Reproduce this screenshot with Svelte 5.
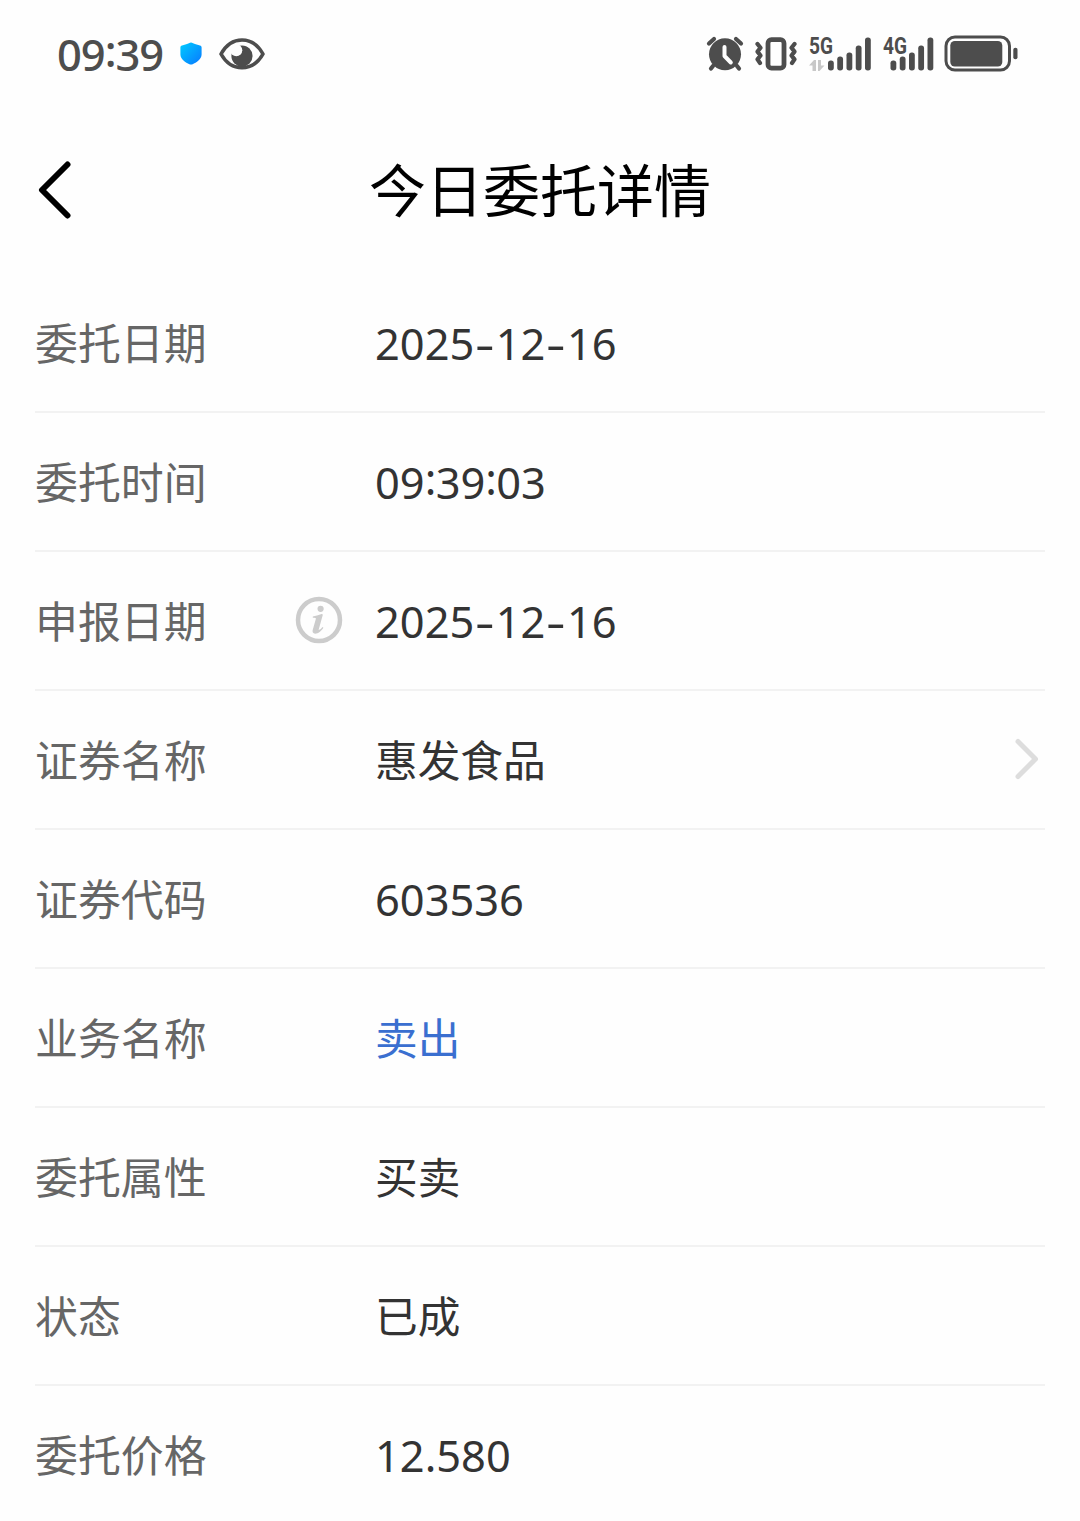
<script lang="ts">
  /**
   * Order detail page: status bar, title bar and a list of label / value rows.
   */

  interface Row {
    label: string;
    value: string;
    numeric?: boolean;
    info?: boolean;
    link?: boolean;
    tone?: "sell";
  }

  const ROWS: Row[] = [
    { label: "委托日期", value: "2025-12-16", numeric: true },
    { label: "委托时间", value: "09:39:03", numeric: true },
    { label: "申报日期", value: "2025-12-16", numeric: true, info: true },
    { label: "证券名称", value: "惠发食品", link: true },
    { label: "证券代码", value: "603536", numeric: true },
    { label: "业务名称", value: "卖出", tone: "sell" },
    { label: "委托属性", value: "买卖" },
    { label: "状态", value: "已成" },
    { label: "委托价格", value: "12.580", numeric: true },
  ];

  // heights of the signal bars, left to right
  const BARS = [10, 14, 18, 25, 33];

  // separators get their own width, so split them from the digits
  const split = (text: string) => text.split(/([-:])/);
</script>

{#snippet digits(text: string)}
  {#each split(text) as part}{#if part === "-"}<span class="dash">-</span>{:else if part === ":"}<span class="colon">:</span>{:else}{part}{/if}{/each}
{/snippet}

{#snippet signal(name: string, start: number, arrows: boolean)}
  <svg class="signal" width={start + 43} height="36" viewBox="0 0 {start + 43} 36" fill="currentColor">
    <text x="0" y="17.6" textLength="24" lengthAdjust="spacingAndGlyphs">{name}</text>
    {#if arrows}
      <path class="signal__arrows" d="M0 29.500 5 24H7v11H3.500v-5.500zM9 24h3v5.500h3.500L10.500 35H9z" />
    {/if}
    {#each BARS as h, i}
      <rect x={start + i * 9.25} y={34.5 - h} width="5.8" height={h} rx="2.7" />
    {/each}
  </svg>
{/snippet}

<div class="page">
  <div class="status">
    <span class="status__time">{@render digits("09:39")}</span>
    <svg class="status__shield" width="22" height="23" viewBox="0 0 22 23">
      <defs>
        <linearGradient id="shield" x1="0" y1="0" x2="1" y2="1">
          <stop offset="0" stop-color="#00ccff" />
          <stop offset="1" stop-color="#0878ff" />
        </linearGradient>
      </defs>
      <path fill="url(#shield)" d="M11 .4c1.300 0 2.600 1.100 4.800 1.900l4.200 1.300c1 .3 1.600 1 1.600 2v6.900c0 4.500-5.300 8.300-9 9.700-1 .4-2.200.4-3.200 0C5.700 20.800.4 17 .4 12.500V5.600c0-1 .6-1.700 1.600-2l4.200-1.300C8.400 1.500 9.700.4 11 .4z" />
    </svg>
    <svg class="status__eye" width="46" height="32" viewBox="0 0 46 32">
      <path fill="none" stroke="currentColor" stroke-width="3.600" stroke-linejoin="round" d="M2 16C7 7 14.500 2 23 2s16 5 21 14c-5 9-12.500 13.800-21 13.800S7 25 2 16z" />
      <circle cx="23" cy="18" r="10.600" fill="currentColor" />
      <circle cx="17.300" cy="12.300" r="6" fill="#fefefe" />
    </svg>

    <div class="status__right">
      <svg class="status__alarm" width="38" height="36" viewBox="0 0 38 36" fill="none" stroke="currentColor" stroke-linecap="round">
        <circle cx="19" cy="18.300" r="16" fill="currentColor" stroke="none" />
        <path stroke-width="4.200" d="M3 7.500 8 3M35 7.500 30 3M7 30 5 32.500M31 30 33 32.500" />
        <path stroke="#fefefe" stroke-width="4" stroke-linejoin="round" d="M18.500 11v9l6.300 6.500" />
      </svg>
      <svg class="status__vibrate" width="44" height="36" viewBox="0 0 44 36" fill="none" stroke="currentColor">
        <rect x="14" y="3.700" width="16" height="28.500" rx="3.500" stroke-width="4.800" />
        <path stroke-width="4.200" stroke-linecap="round" stroke-linejoin="round" d="M3.500 8l3 3.800-3 3.800 3 3.900-3 3.900 2.500 3.600M40.500 8l-3 3.800 3 3.800-3 3.900 3 3.900-2.500 3.600" />
      </svg>
      {@render signal("5G", 19, true)}
      {@render signal("4G", 7.5, false)}
      <svg class="status__battery" width="74" height="38" viewBox="0 0 74 38" fill="currentColor">
        <rect x="2" y="2" width="63.500" height="33" rx="9" fill="none" stroke="currentColor" stroke-width="3" />
        <rect x="6.300" y="6" width="52" height="25.500" rx="4.500" />
        <rect x="69.300" y="12.800" width="4.200" height="11.500" rx="2" />
      </svg>
    </div>
  </div>

  <header class="header">
    <button class="header__back" aria-label="返回">
      <svg width="36" height="60" viewBox="0 0 36 60" fill="none" stroke="#000" stroke-width="6" stroke-linecap="round" stroke-linejoin="round">
        <path d="M32.500 4.500 7 30l25.500 25.500" />
      </svg>
    </button>
    <h1 class="header__title">今日委托详情</h1>
  </header>

  <main class="list">
    {#each ROWS as row (row.label)}
      <div class="row">
        <span class="row__label">{row.label}</span>
        <span class="row__info">
          {#if row.info}
            <svg width="48" height="48" viewBox="0 0 48 48" fill="none" stroke="#ccc">
              <circle cx="24" cy="24" r="21" stroke-width="4.500" />
              <circle cx="25.600" cy="12.800" r="3.100" fill="#ccc" stroke="none" />
              <path fill="#ccc" stroke="none" d="M17.800 20.600c2.500-.7 5.800-1.600 8.800-2.600l1.300.6-4.300 15.500c1.800-.5 2.700-1.500 3.900-3l.9.700c-2 3.400-5.200 5.900-8.200 5.900-2.300 0-3-1.700-2.500-3.600l3.200-11.400c.2-.8-1-1-3.100-1z" />
            </svg>
          {/if}
        </span>
        <span class="row__value" class:row__value--numeric={row.numeric} class:row__value--sell={row.tone === "sell"}>{@render digits(row.value)}</span>
        {#if row.link}
          <svg class="row__arrow" width="30" height="46" viewBox="0 0 30 46" fill="none" stroke="#ddd" stroke-width="5" stroke-linecap="round" stroke-linejoin="round">
            <path d="M4 5.500 21.500 23 4 40.500" />
          </svg>
        {/if}
      </div>
    {/each}
  </main>
</div>

<style>
  :global(body) {
    background: #fefefe;
  }

  .page {
    box-sizing: border-box;
    width: 1080px;
    height: 1521px;
    overflow: hidden;
    background: #fefefe;
    font-family: "Noto Sans", "Noto Sans CJK SC", sans-serif;
  }

  .status {
    display: flex;
    align-items: center;
    box-sizing: border-box;
    height: 107px;
    padding: 0 62px 0 57px;
    color: #4d4d4d;
  }

  .status svg {
    flex-shrink: 0;
    overflow: visible;
  }

  .status__time {
    width: 107px;
    font-size: 43.500px;
    font-weight: 500;
    line-height: 60px;
    letter-spacing: -1.100px;
    white-space: nowrap;
  }

  .status__shield {
    margin-left: 16px;
  }

  .status__eye {
    margin-left: 17px;
  }

  .status__right {
    display: flex;
    align-items: center;
    margin-left: auto;
  }

  .status__vibrate {
    margin-left: 10px;
  }

  .signal {
    margin-left: 11.500px;
  }

  .signal text {
    font-family: Roboto, sans-serif;
    font-size: 23px;
    font-weight: 700;
  }

  .signal__arrows {
    fill: #c8c8c8;
  }

  .status__battery {
    margin-left: 11px;
  }

  .header {
    display: grid;
    grid-template-columns: 140px 1fr 140px;
    align-items: center;
    height: 167px;
  }

  .header__back {
    display: flex;
    margin: 0 0 1px;
    padding: 0 0 0 35px;
    border: none;
    background: none;
  }

  .header__title {
    margin: 0 0 8px;
    color: #000;
    font-family: "Noto Sans CJK SC", sans-serif;
    font-size: 57px;
    font-weight: 400;
    line-height: 80px;
    text-align: center;
  }

  .list {
    padding: 0 35px;
  }

  .row {
    display: flex;
    align-items: center;
    box-sizing: border-box;
    height: 139px;
    border-bottom: 2px solid #f2f2f2;
  }

  .row__label {
    width: 260px;
    padding-bottom: 4px;
    color: #666;
    font-family: "Noto Sans CJK SC", sans-serif;
    font-size: 42.900px;
    line-height: 62px;
  }

  .row__info {
    display: flex;
    width: 80px;
    padding-bottom: 2px;
  }

  .row__value {
    flex: 1;
    padding-bottom: 4px;
    color: #333;
    font-family: "Noto Sans CJK SC", sans-serif;
    font-size: 42.700px;
    line-height: 62px;
    white-space: nowrap;
  }

  .row__value--numeric {
    padding: 2px 0 0;
    font-family: "Noto Sans", sans-serif;
    font-size: 43.400px;
  }

  .row__value--sell {
    color: #3a6fd0;
  }

  .row__arrow {
    margin: 0 1px 2px 0;
  }

  .dash {
    display: inline-block;
    width: 21.500px;
    text-align: center;
    transform: scaleX(1.400);
  }

  .colon {
    display: inline-block;
    width: 11px;
    text-align: center;
    transform: translateY(-4px);
  }
</style>
